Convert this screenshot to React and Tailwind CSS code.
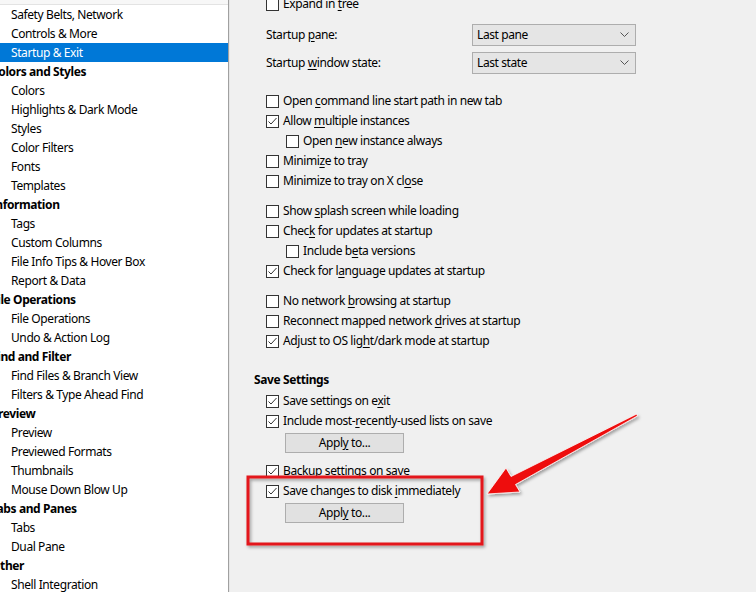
import React from 'react'

const FONT = { fontFamily: '"Segoe UI", "Noto Sans", "Open Sans", sans-serif' }

const tree = [
  ['Safety Belts, Network'],
  ['Controls & More'],
  ['Startup & Exit', 'sel'],
  ['Colors and Styles', 'cat'],
  ['Colors'],
  ['Highlights & Dark Mode'],
  ['Styles'],
  ['Color Filters'],
  ['Fonts'],
  ['Templates'],
  ['Information', 'cat'],
  ['Tags'],
  ['Custom Columns'],
  ['File Info Tips & Hover Box'],
  ['Report & Data'],
  ['File Operations', 'cat'],
  ['File Operations'],
  ['Undo & Action Log'],
  ['Find and Filter', 'cat'],
  ['Find Files & Branch View'],
  ['Filters & Type Ahead Find'],
  ['Preview', 'cat'],
  ['Preview'],
  ['Previewed Formats'],
  ['Thumbnails'],
  ['Mouse Down Blow Up'],
  ['Tabs and Panes', 'cat'],
  ['Tabs'],
  ['Dual Pane'],
  ['Other', 'cat'],
  ['Shell Integration'],
]

// "^" marks the mnemonic letter, drawn underlined
function Mn({ t }) {
  const i = t.indexOf('^')
  if (i < 0) return <span>{t}</span>
  return (
    <span className="whitespace-pre">
      {t.slice(0, i)}
      <span className="underline underline-offset-2">{t[i + 1]}</span>
      {t.slice(i + 2)}
    </span>
  )
}

function Check({ label, checked, indent }) {
  return (
    <div className={'flex h-5 items-center ' + (indent ? 'pl-5' : '')}>
      <span className="flex h-[13px] w-[13px] shrink-0 items-center justify-center border border-[#333] bg-white">
        {checked && (
          <svg width="11" height="11" viewBox="0 0 11 11">
            <path d="M1.5 5.5 L4 8 L9.5 2" fill="none" stroke="#333" strokeWidth="1" />
          </svg>
        )}
      </span>
      <span className="ml-[4px] whitespace-nowrap">
        <Mn t={label} />
      </span>
    </div>
  )
}

function Select({ label, value }) {
  return (
    <div className="flex h-[22px] items-center">
      <span className="w-[206px]">
        <Mn t={label} />
      </span>
      <div className="flex h-[22px] w-[164px] items-center justify-between border border-[#adadad] bg-[#e5e5e5] pl-[4px] pr-[6px]">
        <span>{value}</span>
        <svg width="9" height="6" viewBox="0 0 9 6">
          <path d="M0.5 0.5 L4.5 4.5 L8.5 0.5" fill="none" stroke="#555" strokeWidth="1" />
        </svg>
      </div>
    </div>
  )
}

function ApplyBtn() {
  return (
    <div className="ml-[19px] flex h-5 w-[119px] items-center justify-center border border-[#adadad] bg-[#e1e1e1]">
      <Mn t="Appl^y to..." />
    </div>
  )
}

export default function App() {
  return (
    <div
      className="relative flex h-[592px] w-[756px] overflow-hidden bg-[#f0f0f0] text-[12px] tracking-[-0.4px] text-black"
      style={FONT}
    >
      {/* tree */}
      <div className="flex w-[229px] shrink-0 flex-col overflow-hidden border-r border-[#a0a0a0] bg-white">
        <div className="h-[5px] shrink-0 border-b border-[#e3e3e3] bg-[#f7f7f7]" />
        {tree.map(([t, kind], i) => (
          <div
            key={i}
            className={
              'flex h-[19px] shrink-0 items-center whitespace-nowrap ' +
              (kind === 'sel' ? 'bg-[#0078d7] pl-[11px] text-white' : kind === 'cat' ? 'ml-[-9px] font-bold' : 'pl-[11px]')
            }
          >
            {t}
          </div>
        ))}
      </div>
      <div className="w-px shrink-0 bg-[#e6e6e6]" />

      {/* settings page */}
      <div className="flex flex-1 flex-col pl-[36px]">
        <div className="mt-[-6px]">
          <Check label="Expand in ^tree" />
        </div>
        <div className="mt-[10px] flex flex-col gap-[6px]">
          <Select label="Startup ^pane:" value="Last pane" />
          <Select label="Startup ^window state:" value="Last state" />
        </div>
        <div className="mt-[17px]">
          <Check label="Open ^command line start path in new tab" />
          <Check label="Allow ^multiple instances" checked />
          <Check label="Open ^new instance always" indent />
          <Check label="Minimi^ze to tray" />
          <Check label="Minimize to tray on X cl^ose" />
        </div>
        <div className="mt-[10px]">
          <Check label="Show ^splash screen while loading" />
          <Check label="Chec^k for updates at startup" />
          <Check label="Include b^eta versions" indent />
          <Check label="Check for l^anguage updates at startup" checked />
        </div>
        <div className="mt-[10px]">
          <Check label="No network ^browsing at startup" />
          <Check label="Reconnect mapped network ^drives at startup" />
          <Check label="Adjust to OS lig^ht/dark mode at startup" checked />
        </div>
        <div className="ml-[-12px] mt-[19px] flex h-5 items-center font-bold">Save Settings</div>
        <div className="mt-px">
          <Check label="Save settings on e^xit" checked />
          <Check label="Include most-^recently-used lists on save" checked />
        </div>
        <div className="mt-[2px]">
          <ApplyBtn />
        </div>
        <div className="mt-[8px]">
          <Check label="Backup settings on save" checked />
          <Check label="Save changes to disk ^immediately" checked />
        </div>
        <div className="mt-[2px]">
          <ApplyBtn />
        </div>
      </div>

      {/* annotation */}
      <svg className="pointer-events-none absolute left-0 top-0" width="756" height="592" viewBox="0 0 756 592">
        <defs>
          <filter id="sh" x="-20%" y="-20%" width="140%" height="140%">
            <feDropShadow dx="1.5" dy="2" stdDeviation="1.5" floodColor="#000" floodOpacity="0.35" />
          </filter>
        </defs>
        <rect x="248" y="477" width="234" height="67" fill="none" stroke="#e3121b" strokeWidth="3" filter="url(#sh)" />
        <polygon
          points="487,494 520,492 515.5,484.5 637.5,415.9 636.5,414.1 511,476.5 506,468"
          fill="#ee1111"
          stroke="#fff"
          strokeWidth="0.8"
          strokeLinejoin="round"
          filter="url(#sh)"
        />
      </svg>
    </div>
  )
}
